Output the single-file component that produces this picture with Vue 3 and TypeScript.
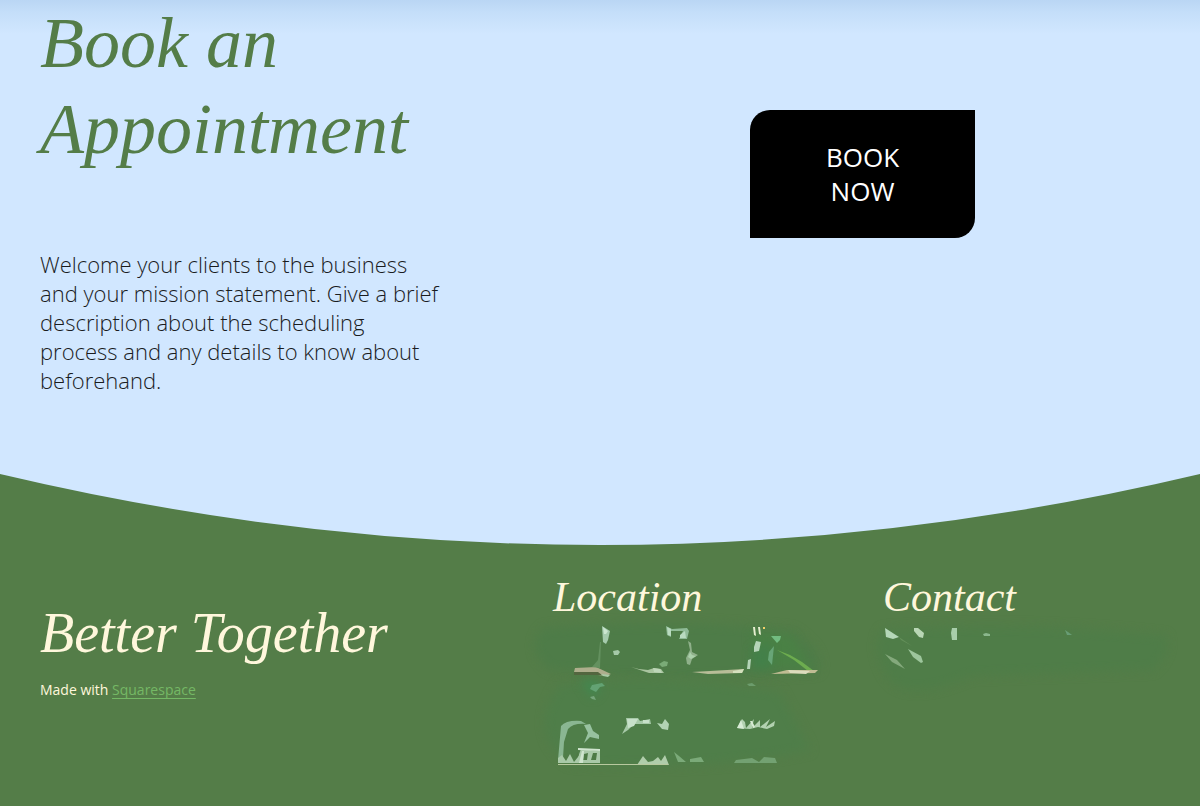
<script setup lang="ts">
interface Stroke {
  d: string
  fill: string
  soft?: boolean
}

const intro: string =
  'Welcome your clients to the business and your mission statement. Give a brief description about the scheduling process and any details to know about beforehand.'

const locationMarks: Stroke[] = [
  { d: 'M14 6 Q150 -4 262 8 Q296 30 288 50 Q150 62 20 48 Q-6 26 14 6Z', fill: '#4e7c48', soft: true },
  { d: 'M30 62 Q140 50 250 70 L280 128 Q180 150 40 142 Q-4 110 30 62Z', fill: '#4f7e49', soft: true },
  { d: 'M222 10 L262 14 L282 48 L224 44Z', fill: '#4a8145', soft: true },
  { d: 'M222 28 L240 20 L242 46 L222 47Z', fill: '#43804a', soft: true },
  { d: 'M50 58 L68 58 L70 68 L62 76Z', fill: '#43874f', soft: true },
  { d: 'M72 4 L80 9 L78 18 L76 22 L73 20Z', fill: '#a5cbad' },
  { d: 'M73 5 L78 9 L76 12 L74 12Z', fill: '#cbe6d0' },
  { d: 'M83 29 L88 28 L90 30 L88 33 L84 33Z', fill: '#a5c9a8' },
  { d: 'M45 46 L66 45 L81 52 L76 54 L44 50Z', fill: '#aeae8c' },
  { d: 'M44 50 L68 50 L72 53 L44 53Z', fill: '#53663f' },
  { d: 'M70 20 L71 20 L70 46 L62 45 L68 38Z', fill: '#64915f' },
  { d: 'M71 52 L80 53 L78 55 L73 54Z', fill: '#a9cba6' },
  { d: 'M101 45 Q110 48 118 48 L124 46 L131 47 L134 51 L119 51Z', fill: '#a9c49f' },
  { d: 'M123 46 L130 47 L132 51 L124 50Z', fill: '#bdd6b8' },
  { d: 'M129 42 L134 39 L138 40 L137 44 L132 45Z', fill: '#7aab77' },
  { d: 'M136 4 L142 7 L157 6 L159 9 L157 17 L149 17 L153 9 L141 9 L141 15 L137 13Z', fill: '#8fbb97' },
  { d: 'M137 5 L141 7 L141 14 L138 13Z M150 13 L155 9 L156 16 L150 16Z', fill: '#b9dbc0' },
  { d: 'M158 19 L161 21 L162 30 L168 33 L162 37 L160 43 L157 42 L156 36 L160 28Z', fill: '#8fb08a' },
  { d: 'M160 30 L162 33 L166 34 L161 37 L158 35Z', fill: '#abd0ab' },
  { d: 'M162 50 L180 49 L214 47 L212 51 L178 52Z', fill: '#b8bd98' },
  { d: 'M203 49 L214 47 L212 51 L203 51Z', fill: '#d4e0bd' },
  { d: 'M223 5 L225 5 L226 14 L224 13Z M228 5 L230 5 L231 13 L229 12Z', fill: '#e6eed0' },
  { d: 'M233 5 L235 5 L235 7 L233 7Z', fill: '#f4d06a' },
  { d: 'M226 19 L231 20 L229 29 L224 30 L224 25Z M218 38 L221 37 L220 47 L217 47Z', fill: '#b5d4b8' },
  { d: 'M241 14 L251 14 L250 18 L247 21Z', fill: '#72bc80' },
  { d: 'M239 30 L244 24 L242 43 L238 38Z', fill: '#68a577' },
  { d: 'M247 28 L260 33 L272 40 L284 49 L278 49 L264 38Z', fill: '#6dac4f' },
  { d: 'M241 52 L257 48 L288 48 L285 51Z', fill: '#c0bc93' },
  { d: 'M258 48 L280 49 L276 52 L260 51Z', fill: '#dcdcbd' },
  { d: 'M62 63 L72 61 L75 64 L70 65 L66 70 L60 67Z', fill: '#63a273' },
  { d: 'M60 75 L64 74 L66 78 L62 77Z', fill: '#76a57b' },
  { d: 'M217 62 L222 61 L226 64 L219 64Z', fill: '#6c9c6c' },
  { d: 'M28 138 L31 104 Q36 98 51 99 L56 102 Q43 101 38 107 L34 120 L33 136Z', fill: '#8ab692' },
  { d: 'M54 103 L60 102 L63 109 L69 113 L69 117 L60 115 L54 121 L58 111Z', fill: '#98c2a0' },
  { d: 'M28 136 L32 133 L36 139 L40 132 L44 140 L48 135 L51 127 L70 129 L70 141 L28 141Z', fill: '#a9c9a8' },
  { d: 'M54 132 L58 131 L57 138 L53 138Z M63 131 L67 131 L66 138 L61 138Z M47 130 L49 133 L46 136Z', fill: '#4d7a45' },
  { d: 'M48 126 L70 127 L70 129 L48 128Z M52 129 L54 129 L53 141 L49 141Z', fill: '#d0e5cf' },
  { d: 'M96 96 L108 96 L110 99 L120 97 L121 102 L104 102 L98 108 L92 112 L97 102Z', fill: '#a6c9a7' },
  { d: 'M97 97 L108 97 L104 104 L98 106Z M113 98 L119 98 L119 101 L113 101Z', fill: '#c7e0c9' },
  { d: 'M127 101 L132 102 L135 97 L139 102 L138 108 L132 107Z', fill: '#b2d4b4' },
  { d: 'M207 106 L212 97 L215 100 L216 106 L224 97 L222 106 L230 98 L230 105 L240 97 L236 105 L245 99 L244 104 L237 107 L228 105 L220 107Z', fill: '#b2d1b0' },
  { d: 'M207 106 L211 98 L214 107Z M220 99 L222 99 L225 105 L223 106Z', fill: '#d8ebd5' },
  { d: 'M107 143 L113 134 L118 140 L123 139 L128 135 L131 139 L135 133 L139 143Z', fill: '#b0cdab' },
  { d: 'M144 130 L149 134 L156 140 L148 140Z M160 137 L171 135 L174 140 L160 140Z', fill: '#7baa79' },
  { d: 'M206 138 L222 136 L229 140 L234 135 L245 136 L247 141 L204 141Z', fill: '#73a172' },
  { d: 'M28 142 L138 142 L138 143 L28 143Z', fill: '#b8c99f' },
]

const contactMarks: Stroke[] = [
  { d: 'M12 8 Q150 -2 295 14 Q300 30 282 48 L100 54 Q30 84 14 50 Q0 24 12 8Z', fill: '#4f7d48', soft: true },
  { d: 'M14 6 L28 15 L22 17 L15 15Z', fill: '#b5d7b8' },
  { d: 'M28 15 L41 24 L30 18Z', fill: '#64905a' },
  { d: 'M43 6 L47 6 L53 11 L52 16 L48 15 L43 9Z', fill: '#b9d6b5' },
  { d: 'M81 6 L86 6 L86 18 L81 18 L80 11Z', fill: '#a8ceaa' },
  { d: 'M112 12 L115 11 L119 12 L119 14 L113 14Z', fill: '#8bb78d' },
  { d: 'M194 8 L197 10 L201 13 L196 13Z', fill: '#689d75' },
  { d: 'M14 32 L26 38 L34 47 L21 40Z', fill: '#84a97c' },
  { d: 'M37 27 L50 34 L52 40 L50 41 L42 35Z', fill: '#9dc69c' },
]
</script>

<template>
  <div class="page">
    <main class="hero">
      <section class="intro">
        <h1>Book an Appointment</h1>
        <p>{{ intro }}</p>
      </section>
      <section class="action">
        <button type="button">BOOK NOW</button>
      </section>
    </main>

    <svg class="curve" viewBox="0 0 1200 72" preserveAspectRatio="none" aria-hidden="true">
      <path d="M0 0 Q600 142 1200 0Z" fill="#d1e7ff" />
    </svg>

    <footer class="footer">
      <section class="brand">
        <h2>Better Together</h2>
        <p>Made with <a href="#">Squarespace</a></p>
      </section>
      <section class="column">
        <h3>Location</h3>
        <svg class="marks" viewBox="0 0 300 150" aria-hidden="true">
          <path v-for="(m, i) in locationMarks" :key="i" :d="m.d" :fill="m.fill" :class="{ soft: m.soft }" />
        </svg>
      </section>
      <section class="column">
        <h3>Contact</h3>
        <svg class="marks" viewBox="-11 0 300 150" aria-hidden="true">
          <path v-for="(m, i) in contactMarks" :key="i" :d="m.d" :fill="m.fill" :class="{ soft: m.soft }" />
        </svg>
      </section>
    </footer>
  </div>
</template>

<style>
body {
  margin: 0;
  background: #547d48;
}
</style>

<style scoped>
.page {
  min-height: 100vh;
  overflow: hidden;
  background: #547d48;
  font-family: "Open Sans", "Noto Sans", sans-serif;
}

h1,
h2,
h3,
p {
  margin: 0;
}

h1,
h2,
h3 {
  font-family: "Liberation Serif", "Times New Roman", serif;
  font-style: italic;
  font-weight: 400;
}

.hero {
  display: grid;
  grid-template-columns: 405px 1fr;
  padding: 0 40px 79px;
  background: linear-gradient(#bad6f4 0, #c4def9 12px, #d1e7ff 34px);
}

h1 {
  color: #547d48;
  font-size: 72px;
  line-height: 86px;
}

.intro p {
  margin-top: 78px;
  color: #1a1c1e;
  font-size: 22px;
  font-weight: 300;
  line-height: 29px;
}

.action {
  display: flex;
  justify-content: center;
  align-items: flex-start;
  padding: 110px 0 0 120px;
}

button {
  width: 225px;
  padding: 30px 60px;
  border: 0;
  border-radius: 20px 0;
  background: #000;
  color: #fff;
  font: 500 26px/34px "Open Sans", "Noto Sans", sans-serif;
}

.curve {
  display: block;
  width: 100%;
  height: 72px;
}

.footer {
  display: grid;
  grid-template-columns: 513fr 330fr 277fr;
  padding: 26px 40px 0;
  color: #fff7dc;
}

.brand {
  padding-top: 28px;
}

h2 {
  font-size: 56px;
  line-height: 66px;
}

.brand p {
  margin-top: 14px;
  font-size: 14px;
  line-height: 20px;
}

a {
  color: #74b865;
  text-underline-offset: 3px;
}

h3 {
  font-size: 42px;
  line-height: 50px;
}

.marks {
  display: block;
  width: 300px;
  height: 150px;
  margin-left: -23px;
  overflow: visible;
}

.soft {
  filter: blur(5px);
}
</style>
